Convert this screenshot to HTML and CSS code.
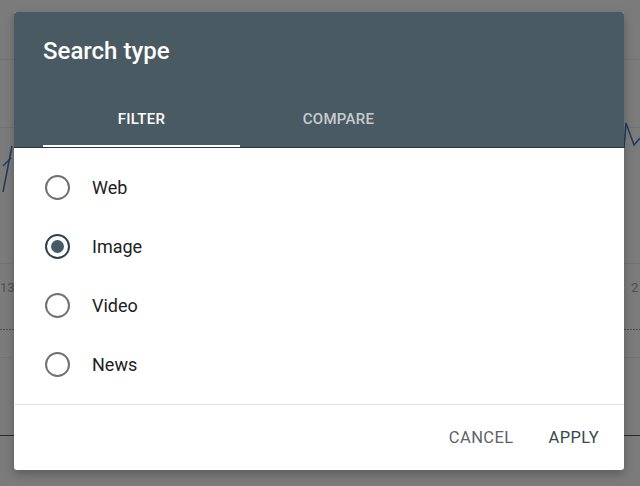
FILE: index.html
```html
<!DOCTYPE html>
<html lang="en">
<head>
<meta charset="utf-8">
<title>Search type</title>
<link rel="stylesheet" href="styles.css">
</head>
<body>
<div class="page">
  <svg class="backdrop" width="640" height="486" viewBox="0 0 640 486" aria-hidden="true">
    <rect width="640" height="486" fill="#7b7b7b"/>
    <line x1="0" y1="59.5" x2="640" y2="59.5" stroke="#737373" stroke-width="1"/>
    <line x1="0" y1="127.5" x2="640" y2="127.5" stroke="#737373" stroke-width="1"/>
    <line x1="0" y1="263.5" x2="640" y2="263.5" stroke="#737373" stroke-width="1"/>
    <line x1="0" y1="329.5" x2="640" y2="329.5" stroke="#4f4f4f" stroke-width="1" stroke-dasharray="2 1"/>
    <line x1="0" y1="357.5" x2="640" y2="357.5" stroke="#737373" stroke-width="1"/>
    <line x1="0" y1="435.5" x2="640" y2="435.5" stroke="#2a2a2a" stroke-width="1"/>
    <text x="0" y="292" font-family="Roboto, sans-serif" font-size="13" fill="#4e4e4e">13</text>
    <text x="631" y="292" font-family="Roboto, sans-serif" font-size="13" fill="#4e4e4e">2</text>
    <polyline points="3,192 12,146" fill="none" stroke="#1f3d5c" stroke-width="1.5"/>
    <polyline points="3,166 11,158" fill="none" stroke="#1f3d5c" stroke-width="1.5"/>
    <polyline points="624,148 626,123 634,145 640,138" fill="none" stroke="#1f3d5c" stroke-width="1.5"/>
  </svg>

  <div class="dialog" role="dialog" aria-labelledby="dlg-title">
    <div class="dialog-header">
      <h1 id="dlg-title" class="dialog-title">Search type</h1>
      <div class="tabs">
        <div class="tab tab-active">FILTER</div>
        <div class="tab">COMPARE</div>
      </div>
    </div>

    <div class="options">
      <label class="option">
        <span class="radio"></span>
        <span class="option-label">Web</span>
      </label>
      <label class="option">
        <span class="radio radio-checked"></span>
        <span class="option-label">Image</span>
      </label>
      <label class="option">
        <span class="radio"></span>
        <span class="option-label">Video</span>
      </label>
      <label class="option">
        <span class="radio"></span>
        <span class="option-label">News</span>
      </label>
    </div>

    <div class="dialog-footer">
      <button class="btn btn-cancel">CANCEL</button>
      <button class="btn btn-apply">APPLY</button>
    </div>
  </div>
</div>
</body>
</html>
```

FILE: styles.css
```css
* {
  box-sizing: border-box;
}

html, body {
  margin: 0;
  padding: 0;
}

body {
  width: 640px;
  height: 486px;
  overflow: hidden;
  background: #7b7b7b;
  font-family: Roboto, "Noto Sans", Arial, sans-serif;
}

.page {
  position: relative;
  width: 640px;
  height: 486px;
}

.backdrop {
  position: absolute;
  left: 0;
  top: 0;
  display: block;
}

.dialog {
  position: absolute;
  left: 14px;
  top: 12px;
  width: 610px;
  height: 458px;
  background: #ffffff;
  border-radius: 3px;
  overflow: hidden;
  box-shadow: 0 4px 10px rgba(0, 0, 0, 0.25);
  display: flex;
  flex-direction: column;
}

.dialog-header {
  background: #495a63;
  padding: 23px 0 0 29px;
  border-bottom: 1px solid #253741;
}

.dialog-title {
  margin: 0;
  font-size: 24px;
  line-height: 32px;
  font-weight: 500;
  color: #ffffff;
}

.tabs {
  display: flex;
}

.tab {
  position: relative;
  width: 197px;
  padding: 42px 0 18px;
  text-align: center;
  font-size: 15px;
  line-height: 20px;
  font-weight: 500;
  letter-spacing: 0.3px;
  color: rgba(255, 255, 255, 0.7);
}

.tab-active {
  color: #ffffff;
}

.tab-active::after {
  content: "";
  position: absolute;
  left: 0;
  right: 0;
  bottom: 0;
  height: 2px;
  background: #ffffff;
}

.options {
  display: flex;
  flex-direction: column;
  padding: 10px 0 10px 31px;
  border-bottom: 1px solid #e3e3e3;
}

.option {
  display: flex;
  align-items: center;
  height: 59px;
}

.radio {
  width: 25px;
  height: 25px;
  border: 2px solid #717171;
  border-radius: 50%;
  display: flex;
  align-items: center;
  justify-content: center;
  flex: none;
}

.radio-checked {
  border-color: #2f414b;
}

.radio-checked::after {
  content: "";
  width: 13px;
  height: 13px;
  border-radius: 50%;
  background: #455a64;
}

.option-label {
  margin-left: 22px;
  font-size: 18px;
  color: #202124;
}

.dialog-footer {
  flex: 1;
  display: flex;
  justify-content: flex-end;
  align-items: center;
  gap: 35px;
  padding: 1px 25px 0 0;
}

.btn {
  border: 0;
  background: none;
  padding: 0;
  font-family: Roboto, "Noto Sans", Arial, sans-serif;
  font-size: 16.5px;
  letter-spacing: 0.4px;
  line-height: 20px;
  cursor: pointer;
}

.btn-cancel {
  color: #5f6368;
}

.btn-apply {
  color: #37474f;
}
```
